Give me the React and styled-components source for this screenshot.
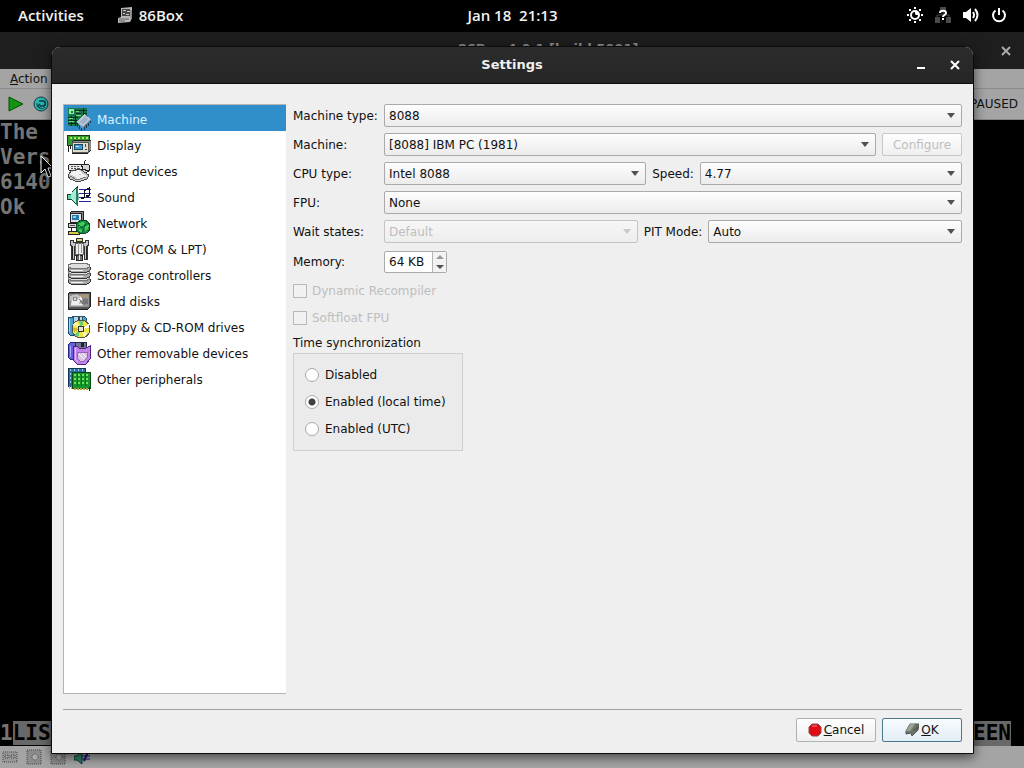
import React, { useState } from "react";
import styled, { createGlobalStyle } from "styled-components";

const GlobalStyle = createGlobalStyle`
  * {
    box-sizing: border-box;
  }
  body {
    margin: 0;
    background-color: #000;
    font-family: "DejaVu Sans", sans-serif;
    font-size: 12px;
    color: #111;
  }
  button, input, select {
    font: inherit;
    color: inherit;
  }
`;

const Desktop = styled.div`
  position: relative;
  display: flex;
  flex-direction: column;
  min-height: 100vh;
  overflow: hidden;
`;

/* gnome top bar */

const TopBar = styled.header`
  display: grid;
  grid-template-columns: 1fr auto 1fr;
  align-items: center;
  height: 32px;
  padding: 0 17px 2px 18px;
  background-color: #000;
  color: #f2f2f2;
  font-family: "Open Sans", sans-serif;
  font-size: 15px;
  font-weight: 600;
  white-space: pre;
`;

const TopGroup = styled.div`
  display: flex;
  align-items: center;
  justify-content: ${(props) => (props.$end ? "flex-end" : "flex-start")};
  gap: ${(props) => (props.$end ? "12px" : "33px")};
`;

const TopButton = styled.button`
  display: flex;
  align-items: center;
  gap: 6px;
  padding: 0;
  border: none;
  background: none;
  white-space: pre;
`;

/* emulator window behind the dialog */

const EmulatorWindow = styled.main`
  flex: 1;
  display: flex;
  flex-direction: column;
`;

const EmulatorTitle = styled.div`
  display: flex;
  align-items: center;
  height: 37px;
  padding: 0 12px 0 118px;
  background-color: #1e1e1e;
  color: #8f8f8f;
  font-size: 13px;
  font-weight: bold;
`;

const TitleText = styled.span`
  flex: 1;
  padding-bottom: 4px;
  text-align: center;
`;

const EmulatorMenu = styled.div`
  display: flex;
  align-items: center;
  height: 20px;
  padding: 0 10px;
  background-color: #a4a4a4;
  border-bottom: 1px solid #8b8b8b;
`;

const MenuButton = styled.button`
  padding: 0;
  border: none;
  background: none;
`;

const EmulatorTools = styled.div`
  display: flex;
  align-items: center;
  gap: 9px;
  height: 31px;
  padding: 0 6px 0 8px;
  background-color: #a4a4a4;
  border-bottom: 1px solid #858585;
`;

const ToolButton = styled.button`
  display: flex;
  padding: 0;
  border: none;
  background: none;
`;

const PausedText = styled.span`
  margin-left: auto;
`;

const CrtScreen = styled.div`
  flex: 1;
  display: flex;
  flex-direction: column;
  justify-content: space-between;
  background-color: #000;
  color: #747474;
  font-family: "DejaVu Sans Mono", monospace;
  font-size: 21px;
  font-weight: bold;
  line-height: 25px;
`;

const CrtLines = styled.div`
  white-space: pre;
`;

const CrtKeys = styled.div`
  display: flex;
  justify-content: space-between;
  padding-right: 13px;
`;

const Inverse = styled.span`
  background-color: #686868;
  color: #000;
`;

const StatusBar = styled.div`
  display: flex;
  align-items: center;
  gap: 8px;
  height: 22px;
  padding: 0 2px;
  background-color: #a4a4a4;
`;

const Pointer = styled.svg`
  position: absolute;
  left: 40px;
  top: 155px;
`;

/* settings dialog */

const Dialog = styled.section`
  position: absolute;
  top: 46px;
  right: 50px;
  bottom: 14px;
  left: 51px;
  display: flex;
  flex-direction: column;
  border: 1px solid #0c0c0c;
  border-radius: 9px 9px 0 0;
  background-color: #efefef;
  box-shadow: 0 3px 12px rgba(0, 0, 0, 0.6);
`;

const DialogTitle = styled.div`
  display: flex;
  align-items: center;
  height: 37px;
  padding: 0 12px 0 11px;
  border-bottom: 1px solid #0c0c0c;
  border-radius: 8px 8px 0 0;
  background-image: linear-gradient(#2c2c2c, #262626);
  color: #f0f0f0;
`;

const DialogHeading = styled.h1`
  flex: 1;
  margin: 0;
  padding: 0 0 2px 68px;
  font-size: 13px;
  text-align: center;
`;

const WindowButton = styled.button`
  display: flex;
  margin-left: 22px;
  padding: 0;
  border: none;
  background: none;
`;

const DialogBody = styled.div`
  flex: 1;
  display: flex;
  flex-direction: column;
  padding: 20px 11px 11px;
`;

const Panels = styled.div`
  flex: 1;
  display: flex;
  gap: 7px;
`;

const Sidebar = styled.nav`
  flex: none;
  width: 223px;
  border: 1px solid #b4b4b4;
  border-right: none;
  background-color: #fff;
`;

const SidebarItem = styled.button`
  display: flex;
  align-items: center;
  gap: 6px;
  width: 100%;
  height: 26px;
  padding: 2px 3px 0;
  border: none;
  background-color: ${(props) => (props.$active ? "#308fcb" : "transparent")};
  color: ${(props) => (props.$active ? "#dcf1fd" : "#111")};
  text-align: left;
`;

const ItemName = styled.span`
  padding-top: 1px;
`;

const Form = styled.form`
  flex: 1;
  min-width: 0;
  display: flex;
  flex-direction: column;
  gap: 6px;
`;

const Row = styled.div`
  display: flex;
  align-items: center;
  gap: 6px;
  height: ${(props) => (props.$tall ? "25px" : "23px")};
`;

const Label = styled.label`
  flex: none;
`;

const RowLabel = styled(Label)`
  width: 85px;
  white-space: nowrap;
`;

const SelectBox = styled.div`
  position: relative;
  flex: 1;
  height: 23px;

  &::after {
    content: "";
    position: absolute;
    top: 9px;
    right: 7px;
    border: 4px solid transparent;
    border-top: 5px solid #505050;
    border-bottom: none;
    opacity: ${(props) => (props.$disabled ? 0.25 : 1)};
    pointer-events: none;
  }
`;

const Select = styled.select`
  display: block;
  width: 100%;
  height: 100%;
  padding: 0 20px 0 4px;
  appearance: none;
  border: 1px solid #aaa;
  border-radius: 2px;
  background-image: linear-gradient(#fdfdfd, #ececec);

  &:disabled {
    border-color: #c4c4c4;
    background-image: linear-gradient(#f6f6f6, #eee);
    color: #bebebe;
    opacity: 1;
  }
`;

const PushButton = styled.button`
  display: flex;
  align-items: center;
  justify-content: center;
  gap: 2px;
  width: 80px;
  height: ${(props) => (props.$footer ? "24px" : "23px")};
  padding: 0;
  border: 1px solid ${(props) => (props.$primary ? "#4b7790" : "#b0b0b0")};
  border-radius: 2px;
  background-image: ${(props) =>
    props.$primary
      ? "linear-gradient(#f8fcff, #e2edf4)"
      : "linear-gradient(#fefefe, #efefef)"};

  &:disabled {
    border-color: #c8c8c8;
    color: #bebebe;
  }
`;

const SpinBox = styled.div`
  display: flex;
  width: 63px;
  height: 22px;
  border: 1px solid #aaa;
  border-radius: 2px;
  background-color: #fff;
`;

const SpinInput = styled.input`
  flex: 1;
  min-width: 0;
  padding: 0 0 0 4px;
  border: none;
  background: none;
  outline: none;
`;

const SpinButtons = styled.div`
  display: flex;
  flex-direction: column;
  width: 14px;
  border-left: 1px solid #b4b4b4;
  background-color: #f3f3f3;
`;

const SpinButton = styled.button`
  flex: 1;
  display: flex;
  align-items: center;
  justify-content: center;
  padding: 0;
  border: none;
  background: none;
`;

const Option = styled.label`
  display: flex;
  align-items: center;
  gap: ${(props) => (props.$radio ? "6px" : "5px")};
  height: 21px;
  color: ${(props) => (props.$disabled ? "#bebebe" : "#111")};
`;

const CheckBox = styled.input`
  width: 14px;
  height: 14px;
  margin: 0;
  appearance: none;
  border: 1px solid #b8b8b8;
  background-color: #f1f1f1;
`;

const Radio = styled.input`
  width: 14px;
  height: 14px;
  margin: 0;
  appearance: none;
  border: 1px solid #a8a8a8;
  border-radius: 50%;
  background-color: #fff;

  &:checked {
    background-image: radial-gradient(circle, #404040 3px, #fff 4px);
  }
`;

const TimeSync = styled.fieldset`
  align-self: flex-start;
  min-width: 0;
  margin: 0;
  padding: 0;
  border: none;
`;

const TimeLegend = styled.legend`
  height: 19px;
  padding: 0;
  line-height: 18px;
`;

const GroupBox = styled.div`
  display: flex;
  flex-direction: column;
  gap: 6px;
  padding: 10px 16px 11px 11px;
  border: 1px solid #cfcfcf;
  background-color: #ebebeb;
`;

const Footer = styled.div`
  display: flex;
  justify-content: flex-end;
  gap: 6px;
  margin-top: 15px;
  padding-top: 8px;
  border-top: 1px solid #a2a2a2;
`;

const Icon = ({ size = 24, children, ...rest }) => (
  <svg
    width={size}
    height={size}
    viewBox={`0 0 ${size} ${size}`}
    shapeRendering={size === 24 ? "crispEdges" : "auto"}
    aria-hidden='true'
    {...rest}>
    {children}
  </svg>
);

const MachineIcon = () => (
  <Icon>
    <path d='M1 1h19v18H1z' fill='#17764a' />
    <path d='M2 2h5v5H2z' fill='#8df09a' />
    <path d='M4 4h2v2H4z' fill='#188044' />
    <path
      d='M8 3h12M9 6h5m2 0h4M1 10h10M1 13h9M1 16h11M4 9v10M8 8v11M16 1v7'
      stroke='#0b2a22'
      strokeWidth='1'
      fill='none'
    />
    <path d='M9 4h3M9 8h5M2 11h4M2 14h5' stroke='#69e070' fill='none' />
    <path
      d='M10 17v3m2-1v3m2-1v3m3-4v3m2-5v3m2-5v3m2-5v2'
      stroke='#20364c'
      fill='none'
    />
    <path d='M9 15l8-8 7 5-8 9z' fill='#8da0b8' />
    <path d='M9 15l8-8 7 5-8 7z' fill='#b9c6d8' />
    <path d='M12 15l6-5 3 2-5 5z' fill='#a2b2c8' />
  </Icon>
);

const DisplayIcon = () => (
  <Icon>
    <path d='M0 2h22v10H0z' fill='#2e9a31' stroke='#123d14' />
    <path
      d='M3 4h2v2H3zM7 4h2v2H7zM11 4h2v2h-2zM15 4h2v2h-2zM19 4h2v2h-2z'
      fill='#b6e45c'
    />
    <path d='M1 12v7M3 12v4' stroke='#222' />
    <path d='M5 9l2-2h17v10l-3 3H5z' fill='#8a8a82' stroke='#222' />
    <path d='M5 9h16v10H5z' fill='#dedccb' stroke='#555' />
    <path d='M7 11h9v6H7z' fill='#1d4660' />
    <path d='M8 12h7v4H8z' fill='#3e9ed4' />
    <path d='M9 13h3v1H9z' fill='#bfeaff' />
    <path d='M18 11v3M18 16h2' stroke='#444' />
  </Icon>
);

const InputIcon = () => (
  <Icon>
    <path d='M17 6V3l2-2' stroke='#222' fill='none' />
    <path d='M12 7l4-2 6 1 1 5-4 3-7-2z' fill='#d5d5d5' stroke='#222' />
    <path d='M2 6l12-1 2 5-13 2-2-2z' fill='#e6e6e6' stroke='#222' />
    <path
      d='M4 7h2m1 0h2m1 0h2M4 9h2m1 0h2m1 0h3'
      stroke='#555'
      fill='none'
    />
    <path d='M4 12l9-2 4 3 5 3-2 4-9 3-8-3-2-3z' fill='#c8c8c8' stroke='#444' />
    <path d='M4 13l8-2 4 3-9 3-4-2z' fill='#f3f3f3' />
    <path d='M7 17l9-2 4 2-9 4z' fill='#eee' />
    <path d='M3 17l7 4 9-3' stroke='#777' fill='none' />
    <path d='M16 10l5 2' stroke='#222' />
  </Icon>
);

const SoundIcon = () => (
  <Icon>
    <path
      d='M12 4h12M12 8h12M12 12h12M12 16h12'
      stroke='#24249c'
      fill='none'
    />
    <path d='M0 9h4l6-7v18l-6-6H0z' fill='#5fd0a8' stroke='#1b3c36' />
    <path d='M4 9l5-6v16l-5-5z' fill='#a4ecd2' />
    <path d='M9 3h2v17H9z' fill='#257c6b' />
    <path d='M11 8h1v7h-1z' fill='#90b4a8' />
    <path d='M17 13V6l5-3v8' stroke='#111' fill='none' />
    <path d='M14 12h3v2h-3zM19 10h3v2h-3z' fill='#111' />
  </Icon>
);

const NetworkIcon = () => (
  <Icon>
    <path d='M3 2l2-2h11v9l-2 2H3z' fill='#88888a' stroke='#222' />
    <path d='M3 2h11v9H3z' fill='#e4e4e4' stroke='#222' />
    <path d='M5 4h7v5H5z' fill='#2c7aa8' />
    <path d='M6 5h3v2H6z' fill='#82d4f1' />
    <path d='M1 12h14v4H1z' fill='#d6d6d6' stroke='#222' />
    <path d='M3 14h5' stroke='#555' />
    <path d='M4 16v4M1 20h11v3H1z' stroke='#222' fill='#d8c847' />
    <circle cx='16' cy='16' r='7' fill='#16913d' stroke='#0c4d27' />
    <path
      d='M12 12l4-1 2 2-3 2-3 1zM18 15l4-1-1 4-3 2zM12 18l3 1 1 3-3-1z'
      fill='#45c958'
    />
    <path d='M11 14l5 3 4-5M15 22l2-4' stroke='#0c5c41' fill='none' />
  </Icon>
);

const PortsIcon = () => (
  <Icon>
    <path d='M9 1h6v3H9z' fill='#d9ce6d' stroke='#333' />
    <path
      d='M3 3h3v2h12V3h3v5h-1v14h-3V9l-2 10H9L7 9v13H4V8H3z'
      fill='#c6c6c6'
      stroke='#333'
    />
    <path d='M8 6h8v11H8z' fill='#ededed' stroke='#666' />
    <path d='M11 6v11M14 6v10' stroke='#999' />
    <path d='M5 9v13M19 9v13' stroke='#222' />
    <path d='M9 18h6v5H9z' fill='#6c6c6c' stroke='#222' />
    <path d='M12 18v5' stroke='#eee' />
  </Icon>
);

const StorageIcon = () => (
  <Icon>
    {[15, 9, 3].map((y) => (
      <g key={y}>
        <path
          d={`M1 ${y + 1}v3c2 4 20 4 22 0v-3`}
          fill='#a8a8a8'
          stroke='#333'
        />
        <ellipse
          cx='12'
          cy={y}
          rx='11'
          ry='3'
          fill='#dedede'
          stroke='#777'
        />
        <path d={`M4 ${y + 4}c4 1 8 1 12 0`} stroke='#f4f4f4' fill='none' />
      </g>
    ))}
  </Icon>
);

const HardDiskIcon = () => (
  <Icon>
    <path d='M1 5l2-2h20v15l-2 2H1z' fill='#555' stroke='#222' />
    <path d='M2 5h20v13H2z' fill='#929292' />
    <path d='M3 7l6-2 6 3 1 9H4z' fill='#c0c0c0' />
    <path d='M4 16l2-7 4 3 4-5 1 3-4 4 5 2z' fill='#efefef' />
    <circle cx='8' cy='10' r='2' fill='#ddd' stroke='#888' />
    <path d='M15 6h6v2h-6z' fill='#b89a55' />
    <path d='M16 10h5v5h-5z' fill='#747474' />
    <path d='M12 10l5 6' stroke='#777' />
  </Icon>
);

const FloppyIcon = () => (
  <Icon>
    <path d='M1 2h4V1h12l2 2v17H3l-2-2z' fill='#4fa2d2' stroke='#1c4c6c' />
    <path d='M6 1h9v6H6z' fill='#bcd4de' stroke='#34566c' />
    <path d='M11 2h2v4h-2z' fill='#2c4d66' />
    <path d='M2 4v13' stroke='#9fdcf8' />
    <circle cx='14' cy='14' r='9' fill='#efe646' stroke='#555' />
    <path d='M14 14L6 10l3-4zM14 14l7 5-4 3z' fill='#fff7a8' />
    <path d='M14 14L12 6l5 0zM14 14l-3 8-4-2z' fill='#68cf76' />
    <path d='M14 14l8-5 0 4z' fill='#fff' />
    <path d='M14 14l-7 3-1-4z' fill='#d3b920' />
    <path d='M11 11h6v6h-6z' fill='#333' />
    <path d='M12 12h4v4h-4z' fill='#e4e4d0' />
  </Icon>
);

const RemovableIcon = () => (
  <Icon>
    <path d='M1 4l3-3h12v17H3l-2-2z' fill='#6560dc' stroke='#26237c' />
    <path d='M3 5v11' stroke='#aaa6ff' />
    <path d='M8 1h11v6H8z' fill='#757493' stroke='#28264c' />
    <path d='M14 2h3v4h-3z' fill='#222' />
    <path
      d='M7 5h3l2 2h7l4-2v13l-4 5h-9l-4-4V6z'
      fill='#c084e8'
      stroke='#512480'
    />
    <path d='M8 7v11l3 3' stroke='#e3baff' fill='none' />
    <path d='M10 11h10v6l-3 3h-4l-3-3z' fill='#d8c4df' stroke='#9a62c0' />
    <path d='M12 13l5 5m-2-6l4 4' stroke='#fff' />
  </Icon>
);

const PeripheralsIcon = () => (
  <Icon>
    <path d='M1 1h17v18H1z' fill='#2b6da0' stroke='#143754' />
    <path
      d='M3 3h1M7 3h1M11 3h1M15 3h1M3 7h1M3 11h1M3 15h1'
      stroke='#9cd3f2'
      strokeWidth='2'
    />
    <path d='M2 19v3M4 19v3' stroke='#c8b23a' />
    <path d='M5 5h18v16H5z' fill='#14952d' stroke='#0c4818' />
    {[8, 12, 16].map((y) => (
      <path
        key={y}
        d={`M7 ${y}h2M11 ${y}h2M15 ${y}h2M19 ${y}h2`}
        stroke='#75e25c'
        strokeWidth='2'
      />
    ))}
    <path d='M10 7v12M14 7v12M18 7v12' stroke='#0c6a20' />
    <path
      d='M7 22h2m1 0h2m1 0h2m1 0h2m1 0h2'
      stroke='#b6a433'
      strokeWidth='2'
    />
    <path d='M22 20v4' stroke='#222' />
  </Icon>
);

const BoxIcon = () => (
  <Icon size={16}>
    <path d='M4 1l11-1v11l-2 4-12 1V11l3-1z' fill='#b8b8b8' />
    <path d='M5 2h8v7H5z' fill='#444' />
    <path d='M6 3h3v1H6zM10 4h3v1h-3zM6 6h2v1H6zM9 7h3v1H9z' fill='#ccc' />
    <path d='M2 12h10M2 14h6M14 3v8' stroke='#666' fill='none' />
  </Icon>
);

const BrightnessIcon = () => (
  <Icon size={16}>
    <circle cx='8' cy='8' r='5' fill='#fff' />
    <path d='M8 5a3 3 0 1 0 3 3h-2l-1-1z' fill='#000' />
    <path
      d='M7 0h2v2H7zM7 14h2v2H7zM0 7h2v2H0zM14 7h2v2h-2zM2 2h2v2H2zM12 12h2v2h-2zM2 12h2v2H2zM12 2h2v2h-2z'
      fill='#fff'
    />
  </Icon>
);

const UnknownNetIcon = () => (
  <Icon size={16}>
    <path d='M5 0h6v5H5zM0 10h5v6H0zM11 10h5v6h-5z' fill='#4a4a4a' />
    <path d='M8 5v3M2 10V8h12v2' stroke='#4a4a4a' fill='none' />
    <path
      d='M5 6c0-3 6-3 6 0 0 2-3 2-3 4'
      stroke='#fff'
      strokeWidth='2'
      fill='none'
    />
    <path d='M7 11h2v2H7z' fill='#fff' />
  </Icon>
);

const VolumeIcon = () => (
  <Icon size={16}>
    <path d='M0 5h3l5-4v14l-5-4H0z' fill='#fff' />
    <path
      d='M10 5q2 3 0 6M12 2q5 6 0 12'
      stroke='#fff'
      strokeWidth='2'
      fill='none'
    />
  </Icon>
);

const PowerIcon = () => (
  <Icon size={16}>
    <path
      d='M4.500 3.500a6 6 0 1 0 7 0'
      stroke='#fff'
      strokeWidth='2'
      fill='none'
    />
    <path d='M8 1v7' stroke='#fff' strokeWidth='2' />
  </Icon>
);

const CloseIcon = ({ color = "#fff" }) => (
  <Icon size={12}>
    <path d='M2 2l8 8M10 2l-8 8' stroke={color} strokeWidth='2' />
  </Icon>
);

const MinimizeIcon = () => (
  <Icon size={12}>
    <path d='M2 8h8v2H2z' fill='#fff' />
  </Icon>
);

const PlayIcon = () => (
  <Icon size={16}>
    <path d='M1 1v14l14-7z' fill='#129312' stroke='#064d06' />
  </Icon>
);

const ResetIcon = () => (
  <Icon size={16}>
    <circle cx='8' cy='8' r='7' fill='#2fb5b0' stroke='#0b3f44' />
    <path
      d='M6 5h4c3 0 3 5 0 5H7M7 8l-2 2 2 2'
      stroke='#073e45'
      strokeWidth='1.500'
      fill='none'
    />
    <path d='M4 7c-1 6 6 7 8 4' stroke='#0b4f55' fill='none' />
  </Icon>
);

const CassetteIcon = () => (
  <Icon size={16}>
    <path
      d='M1 3h14v10H1zM3 6h4v3H3zM9 6h4v3H9z'
      fill='#989898'
      stroke='#444'
      strokeDasharray='1 1'
    />
  </Icon>
);

const DriveIcon = () => (
  <Icon size={16}>
    <path
      d='M1 1h14v14H1z'
      fill='#8b8b8b'
      stroke='#444'
      strokeDasharray='1 1'
    />
    <circle
      cx='9'
      cy='8'
      r='3'
      fill='#aaa'
      stroke='#444'
      strokeDasharray='1 1'
    />
  </Icon>
);

const SmallSoundIcon = () => (
  <Icon size={16}>
    <path d='M8 4h8M8 7h8M8 10h8' stroke='#15156e' />
    <path d='M0 7h3l5-6v14l-5-4H0z' fill='#2c8066' stroke='#12332c' />
    <path d='M10 12l4-9' stroke='#15156e' strokeWidth='2' />
  </Icon>
);

const CancelIcon = () => (
  <Icon size={14}>
    <path
      d='M4 1h6l3 3v6l-3 3H4l-3-3V4z'
      fill='#e00a17'
      stroke='#8c4a4a'
    />
    <path d='M4 3h5' stroke='#ff7a7a' />
  </Icon>
);

const AcceptIcon = () => (
  <Icon size={14}>
    <path d='M5 1h9l-1 6-6 6-1-3-5 1 0-3z' fill='#6d766c' stroke='#4d544c' />
    <path d='M5 1h5l-5 7H1z' fill='#99a396' />
    <path d='M7 9l6-7v4z' fill='#545c54' />
  </Icon>
);

const pages = [
  { name: "Machine", icon: <MachineIcon /> },
  { name: "Display", icon: <DisplayIcon /> },
  { name: "Input devices", icon: <InputIcon /> },
  { name: "Sound", icon: <SoundIcon /> },
  { name: "Network", icon: <NetworkIcon /> },
  { name: "Ports (COM & LPT)", icon: <PortsIcon /> },
  { name: "Storage controllers", icon: <StorageIcon /> },
  { name: "Hard disks", icon: <HardDiskIcon /> },
  { name: "Floppy & CD-ROM drives", icon: <FloppyIcon /> },
  { name: "Other removable devices", icon: <RemovableIcon /> },
  { name: "Other peripherals", icon: <PeripheralsIcon /> },
];

const syncModes = ["Disabled", "Enabled (local time)", "Enabled (UTC)"];

const Dropdown = ({ id, value, disabled }) => (
  <SelectBox $disabled={disabled}>
    <Select id={id} disabled={disabled}>
      <option>{value}</option>
    </Select>
  </SelectBox>
);

const MachineForm = () => {
  const [memory, setMemory] = useState(64);
  const [sync, setSync] = useState("Enabled (local time)");

  return (
    <Form>
      <Row>
        <RowLabel htmlFor='type'>Machine type:</RowLabel>
        <Dropdown id='type' value='8088' />
      </Row>
      <Row>
        <RowLabel htmlFor='machine'>Machine:</RowLabel>
        <Dropdown id='machine' value='[8088] IBM PC (1981)' />
        <PushButton type='button' disabled>
          Configure
        </PushButton>
      </Row>
      <Row>
        <RowLabel htmlFor='cpu'>CPU type:</RowLabel>
        <Dropdown id='cpu' value='Intel 8088' />
        <Label htmlFor='speed'>Speed:</Label>
        <Dropdown id='speed' value='4.77' />
      </Row>
      <Row>
        <RowLabel htmlFor='fpu'>FPU:</RowLabel>
        <Dropdown id='fpu' value='None' />
      </Row>
      <Row>
        <RowLabel htmlFor='wait'>Wait states:</RowLabel>
        <Dropdown id='wait' value='Default' disabled />
        <Label htmlFor='pit'>PIT Mode:</Label>
        <Dropdown id='pit' value='Auto' />
      </Row>
      <Row $tall>
        <RowLabel htmlFor='memory'>Memory:</RowLabel>
        <SpinBox>
          <SpinInput id='memory' type='text' value={`${memory} KB`} readOnly />
          <SpinButtons>
            <SpinButton
              type='button'
              aria-label='More memory'
              onClick={() => setMemory(memory + 16)}>
              <svg width='8' height='4'>
                <path d='M0 4l4-4 4 4z' fill='#999' />
              </svg>
            </SpinButton>
            <SpinButton
              type='button'
              aria-label='Less memory'
              onClick={() => setMemory(Math.max(16, memory - 16))}>
              <svg width='8' height='4'>
                <path d='M0 0l4 4 4-4z' fill='#505050' />
              </svg>
            </SpinButton>
          </SpinButtons>
        </SpinBox>
      </Row>
      <Option $disabled>
        <CheckBox type='checkbox' disabled />
        Dynamic Recompiler
      </Option>
      <Option $disabled>
        <CheckBox type='checkbox' disabled />
        Softfloat FPU
      </Option>
      <TimeSync>
        <TimeLegend>Time synchronization</TimeLegend>
        <GroupBox>
          {syncModes.map((mode) => (
            <Option key={mode} $radio>
              <Radio
                type='radio'
                name='sync'
                checked={sync === mode}
                onChange={() => setSync(mode)}
              />
              {mode}
            </Option>
          ))}
        </GroupBox>
      </TimeSync>
    </Form>
  );
};

const App = () => {
  const [page, setPage] = useState("Machine");

  return (
    <Desktop>
      <GlobalStyle />
      <TopBar>
        <TopGroup>
          <TopButton>Activities</TopButton>
          <TopButton>
            <BoxIcon />
            86Box
          </TopButton>
        </TopGroup>
        <TopButton>{"Jan 18  21:13"}</TopButton>
        <TopGroup $end>
          <BrightnessIcon />
          <UnknownNetIcon />
          <VolumeIcon />
          <PowerIcon />
        </TopGroup>
      </TopBar>

      <EmulatorWindow>
        <EmulatorTitle>
          <TitleText>86Box 4.0.1 [build 5001]</TitleText>
          <WindowButton aria-label='Close 86Box'>
            <CloseIcon color='#aaa' />
          </WindowButton>
        </EmulatorTitle>
        <EmulatorMenu>
          <MenuButton>
            <u>A</u>ction
          </MenuButton>
        </EmulatorMenu>
        <EmulatorTools>
          <ToolButton aria-label='Resume'>
            <PlayIcon />
          </ToolButton>
          <ToolButton aria-label='Reset'>
            <ResetIcon />
          </ToolButton>
          <PausedText>PAUSED</PausedText>
        </EmulatorTools>
        <CrtScreen>
          <CrtLines>{"The\nVers\n6140\nOk"}</CrtLines>
          <CrtKeys>
            <span>
              1<Inverse>LIST</Inverse>
            </span>
            <Inverse>EEN</Inverse>
          </CrtKeys>
        </CrtScreen>
        <StatusBar>
          <CassetteIcon />
          <DriveIcon />
          <DriveIcon />
          <SmallSoundIcon />
        </StatusBar>
      </EmulatorWindow>

      <Pointer width='14' height='24' viewBox='0 0 14 24' aria-hidden='true'>
        <path
          d='M1 1v17l4-4 3 8 3-1-3-8h5z'
          fill='#000'
          stroke='#fff'
        />
      </Pointer>

      <Dialog role='dialog' aria-label='Settings'>
        <DialogTitle>
          <DialogHeading>Settings</DialogHeading>
          <WindowButton aria-label='Minimize'>
            <MinimizeIcon />
          </WindowButton>
          <WindowButton aria-label='Close'>
            <CloseIcon />
          </WindowButton>
        </DialogTitle>
        <DialogBody>
          <Panels>
            <Sidebar>
              {pages.map((item) => (
                <SidebarItem
                  key={item.name}
                  $active={item.name === page}
                  onClick={() => setPage(item.name)}>
                  {item.icon}
                  <ItemName>{item.name}</ItemName>
                </SidebarItem>
              ))}
            </Sidebar>
            <MachineForm />
          </Panels>
          <Footer>
            <PushButton $footer>
              <CancelIcon />
              <span>
                <u>C</u>ancel
              </span>
            </PushButton>
            <PushButton $footer $primary>
              <AcceptIcon />
              <span>
                <u>O</u>K
              </span>
            </PushButton>
          </Footer>
        </DialogBody>
      </Dialog>
    </Desktop>
  );
};

export default App;
